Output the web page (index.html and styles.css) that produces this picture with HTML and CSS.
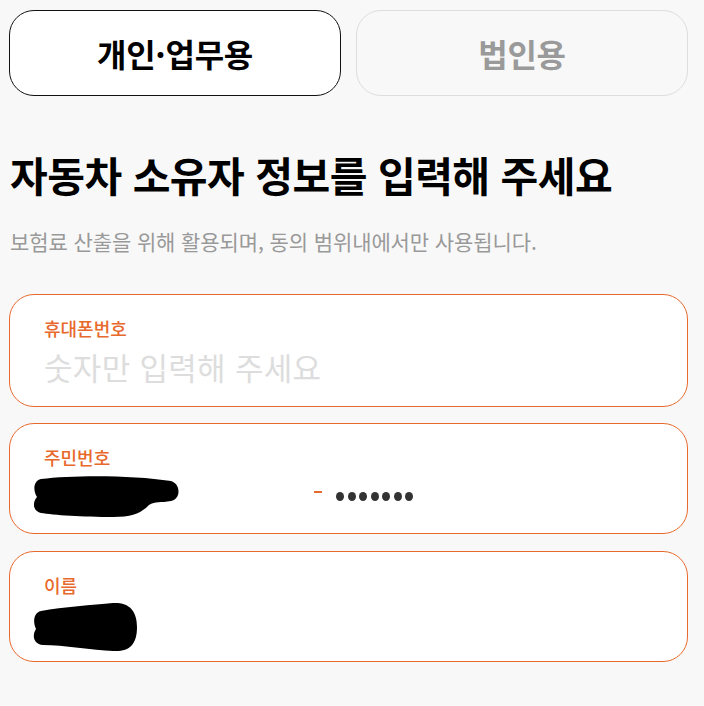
FILE: index.html
```html
<!DOCTYPE html>
<html lang="ko">
<head>
  <meta charset="UTF-8">
  <meta name="viewport" content="width=device-width, initial-scale=1.0">
  <title>자동차 소유자 정보</title>
  <link rel="stylesheet" href="styles.css">
</head>
<body>
  <div class="container">
    <div class="tabs">
      <button class="tab active">개인·업무용</button>
      <button class="tab">법인용</button>
    </div>

    <h2 class="title">자동차 소유자 정보를 입력해 주세요</h2>
    <p class="desc">보험료 산출을 위해 활용되며, 동의 범위내에서만 사용됩니다.</p>

    <div class="field">
      <label class="label">휴대폰번호</label>
      <div class="placeholder">숫자만 입력해 주세요</div>
    </div>

    <div class="field">
      <label class="label">주민번호</label>
      <div class="row">
        <div class="front"></div>
        <span class="dash"></span>
        <span class="dots"><i></i><i></i><i></i><i></i><i></i><i></i><i></i></span>
      </div>
      <!-- 가림 처리 -->
      <svg class="mask mask-ssn" width="146" height="42" viewBox="0 0 146 42">
        <path d="M8 4 C40 0 100 0 138 6 C148 9 148 24 138 26 C128 28 122 26 116 30 C108 38 100 42 80 42 C50 42 20 40 8 38 C0 36 -1 28 4 22 C0 16 0 6 8 4 Z" fill="#000"/>
      </svg>
    </div>

    <div class="field">
      <label class="label">이름</label>
      <div class="row"></div>
      <svg class="mask mask-name" width="104" height="49" viewBox="0 0 104 49">
        <path d="M8 8 C30 4 60 2 80 0 C98 -1 104 10 104 24 C104 42 96 49 80 48 C60 47 30 42 10 42 C0 41 -1 32 3 26 C0 20 0 10 8 8 Z" fill="#000"/>
      </svg>
    </div>
  </div>
</body>
</html>
```

FILE: styles.css
```css
body {
  margin: 0;
  background-color: #f8f8f8;
  font-family: "Noto Sans CJK KR", "Noto Sans", sans-serif;
}
.container {
  padding: 10px 16px 0 9px;
}
.tabs {
  display: flex;
  gap: 15px;
}
.tab {
  flex: 1;
  height: 86px;
  border: 1px solid #dddddd;
  border-radius: 25px;
  background-color: #f8f8f8;
  color: #9a9a9a;
  font-family: inherit;
  font-size: 32px;
  font-weight: 700;
  letter-spacing: -0.3px;
  padding: 0;
}
.tab.active {
  border-color: #111111;
  background-color: #ffffff;
  color: #000000;
}
.title {
  margin: 52px 0 0 1px;
  font-size: 41px;
  line-height: 52px;
  font-weight: 700;
  letter-spacing: -0.5px;
  color: #000000;
}
.desc {
  margin: 27px 0 0 1px;
  font-size: 21px;
  line-height: 28px;
  color: #999999;
  letter-spacing: -0.1px;
}
.field {
  position: relative;
  box-sizing: border-box;
  height: 111px;
  margin-top: 16px;
  padding: 21px 34px 0;
  background-color: #ffffff;
  border: 1px solid #e8692c;
  border-radius: 25px;
}
.field:last-child {
  margin-top: 17px;
}
.desc + .field {
  height: 113px;
  margin-top: 39px;
}
.label {
  display: block;
  font-size: 18px;
  line-height: 25px;
  font-weight: 500;
  color: #e8692c;
}
.placeholder {
  margin-top: 5px;
  font-size: 31px;
  line-height: 42px;
  color: #dddddd;
  letter-spacing: 0.3px;
}
.row {
  display: flex;
  align-items: center;
  height: 40px;
  margin-top: 6px;
}
.front {
  width: 270px;
}
.dash {
  width: 8px;
  height: 2px;
  background-color: #e8692c;
  margin-top: -8px;
}
.dots {
  display: flex;
  gap: 3.5px;
  margin-left: 14px;
}
.dots i {
  width: 8px;
  height: 9px;
  border-radius: 50%;
  background-color: #333333;
}
.mask {
  position: absolute;
}
.mask-ssn {
  left: 23px;
  top: 51px;
}
.mask-name {
  left: 23px;
  top: 51px;
}
```
